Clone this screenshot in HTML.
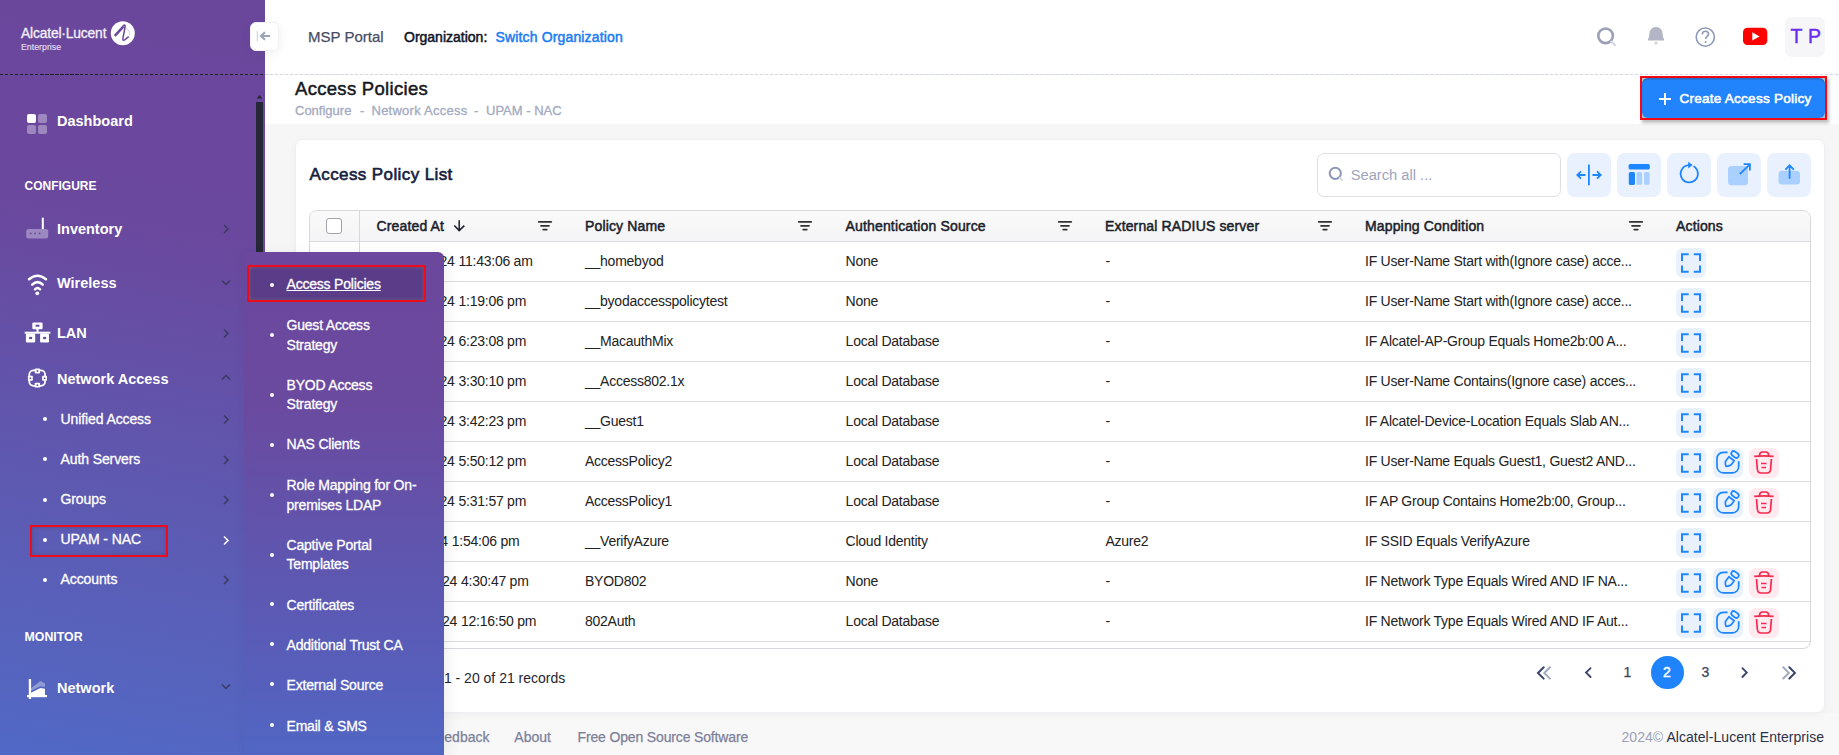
<!DOCTYPE html>
<html><head><meta charset="utf-8">
<style>
*{box-sizing:border-box;margin:0;padding:0}
html,body{width:1839px;height:755px;overflow:hidden;background:#f6f6f6;font-family:"Liberation Sans",sans-serif;color:#1f2430}
.t{position:absolute;white-space:nowrap;line-height:1}
.b{font-weight:bold}
svg{position:absolute;overflow:visible}
#side{position:absolute;left:0;top:0;width:265px;height:755px;background:linear-gradient(190deg,#6b479c 0%,#6a489d 30%,#5565bf 90%,#5068c6 100%)}
#topbar{position:absolute;left:265px;top:0;width:1574px;height:74px;background:#fff}
#dash1{position:absolute;left:0;top:74px;width:265px;height:1px;background:repeating-linear-gradient(90deg,#222 0 3.5px,transparent 3.5px 5px)}
#dash2{position:absolute;left:265px;top:74px;width:1574px;height:1px;background:repeating-linear-gradient(90deg,#d5d9e6 0 3.5px,transparent 3.5px 5px)}
#phead{position:absolute;left:265px;top:75px;width:1574px;height:49px;background:#fff}
#card{position:absolute;left:295px;top:139px;width:1530px;height:574px;background:#fff;border-radius:8px;border:1px solid #efeff3;box-shadow:0 3px 8px rgba(0,0,0,.035)}
#footer{position:absolute;left:265px;top:713px;width:1574px;height:42px;background:#f8f8f8}
.side .t{color:#fff}
.mi{font-size:14.5px;font-weight:bold}
.si{font-size:14px;-webkit-text-stroke:0.3px #fff;letter-spacing:-0.1px}
.chev{stroke:#3b3a60;stroke-width:1.5;fill:none}
.bul{position:absolute;width:4px;height:4px;border-radius:50%;background:#fff}
#fly{position:absolute;left:244px;top:252px;width:200px;height:503px;border-top-right-radius:6px;background:linear-gradient(180deg,#6b479d 0%,#6a4a9f 30%,#5a5bb6 75%,#5166c3 100%);box-shadow:4px 2px 14px rgba(40,40,60,.07)}
.fi{font-size:14px;color:#fff;line-height:19.5px;letter-spacing:-0.2px;-webkit-text-stroke:0.3px #fff}
.th{font-size:14px;font-weight:normal;color:#1b1e2b;letter-spacing:0.15px;-webkit-text-stroke:0.5px #1b1e2b}
.td{font-size:14px;color:#222;letter-spacing:-0.25px}
.hl{position:absolute;left:309px;width:1501px;height:1px;background:#dcdcdf}
.ab{position:absolute;width:30px;height:30px;border-radius:7px;background:#e8f1fd}
.ab.r{background:#ffeaef}
.ib{position:absolute;top:153px;width:44px;height:44px;border-radius:8px;background:#e8f1fd}
</style></head><body>
<div id="side" class="side">
  <!-- logo -->
  <div class="t" style="left:21px;top:27.1px;font-size:13.8px;color:#f4f0fa;letter-spacing:-0.15px;-webkit-text-stroke:0.3px #f4f0fa">Alcatel·Lucent</div>
  <div class="t" style="left:21px;top:42.6px;font-size:8.8px;color:#e6def2;-webkit-text-stroke:0.15px #e6def2">Enterprise</div>
  <svg style="left:0;top:0" width="1" height="1">
    <circle cx="122.8" cy="33.2" r="12" fill="#fff"/>
    <path d="M114.8 35.8 L123.5 26.3" stroke="#6b479c" stroke-width="2.5" fill="none"/><path d="M123 26 Q125.6 23.6 125 27.5 L122.9 38.3 Q122.4 41.3 125 39.6 L128.7 36.6" stroke="#6b479c" stroke-width="1.5" fill="none"/><path d="M126.6 28.6 Q129.8 29.6 129.5 35.3" stroke="#c9b9de" stroke-width="0.8" fill="none"/>
  </svg>
  <!-- scrollbar -->
  <div style="position:absolute;left:256px;top:102px;width:7px;height:153px;background:#252836"></div>
  <svg style="left:0;top:0" width="1" height="1"><path d="M256.5 98.5 L259.5 95 L262.5 98.5Z" fill="#252836"/></svg>

  <!-- Dashboard -->
  <svg style="left:0;top:0" width="1" height="1">
    <rect x="27" y="114" width="9" height="9" rx="2" fill="#fff"/>
    <rect x="38" y="114" width="9" height="9" rx="2" fill="#fff" fill-opacity=".35"/>
    <rect x="27" y="125" width="9" height="9" rx="2" fill="#fff" fill-opacity=".35"/>
    <rect x="38" y="125" width="9" height="9" rx="2" fill="#fff" fill-opacity=".35"/>
  </svg>
  <div class="t mi" style="left:57px;top:113.5px">Dashboard</div>
  <div class="t b" style="left:24.5px;top:179.7px;font-size:12px">CONFIGURE</div>
  <!-- Inventory -->
  <svg style="left:0;top:0" width="1" height="1">
    <rect x="41.8" y="217.7" width="2" height="11.3" fill="#fff"/>
    <rect x="26.2" y="229" width="22" height="9.6" rx="2.5" fill="#fff" fill-opacity=".35"/>
    <circle cx="30.6" cy="233.4" r=".9" fill="#6b479c"/><circle cx="35.1" cy="233.4" r=".9" fill="#6b479c"/><circle cx="39.6" cy="233.4" r=".9" fill="#6b479c"/>
  </svg>
  <div class="t mi" style="left:57px;top:221.9px">Inventory</div>
  <svg style="left:0;top:0" width="1" height="1"><path class="chev" d="M224 225 L228 229 L224 233"/></svg>
  <!-- Wireless -->
  <svg style="left:0;top:0" width="1" height="1" fill="none" stroke="#fff" stroke-width="2.5" stroke-linecap="round">
    <path d="M29 279.3 Q37.5 272.2 46 279.3"/>
    <path d="M32.2 284.6 Q37.5 279.6 42.8 284.6"/>
    <path d="M35 289.3 Q37.5 286.8 40 289.3"/>
    <circle cx="37.3" cy="293.3" r="1.9" fill="#fff" stroke="none"/>
  </svg>
  <div class="t mi" style="left:57px;top:275.8px">Wireless</div>
  <svg style="left:0;top:0" width="1" height="1"><path class="chev" d="M222 280.5 L226 284.5 L230 280.5"/></svg>
  <!-- LAN -->
  <svg style="left:0;top:0" width="1" height="1" fill="#fff">
    <rect x="32.3" y="322.4" width="10.3" height="6.9" rx="1.3"/><rect x="35.6" y="324.7" width="3.8" height="2" fill="#6b479d"/>
    <rect x="36.5" y="329" width="2" height="3"/>
    <rect x="24.7" y="331.7" width="25.7" height="2"/>
    <rect x="25.9" y="333.5" width="9.3" height="9" rx="1.3"/><rect x="29.1" y="336.9" width="3" height="2.2" fill="#6a4a9f"/>
    <rect x="40.1" y="333.5" width="8.9" height="9" rx="1.3"/><rect x="43.1" y="336.9" width="3" height="2.2" fill="#6a4a9f"/>
  </svg>
  <div class="t mi" style="left:57px;top:325.9px">LAN</div>
  <svg style="left:0;top:0" width="1" height="1"><path class="chev" d="M224 329.5 L228 333.5 L224 337.5"/></svg>
  <!-- Network Access -->
  <svg style="left:0;top:0" width="1" height="1" fill="none" stroke="#fff" stroke-width="1.8">
    <rect x="29.3" y="370.4" width="15.8" height="15.4" rx="4.2"/>
    <g fill="#fff" stroke="none">
      <rect x="34.7" y="368.5" width="5.4" height="4.9" rx=".8"/>
      <rect x="27.9" y="375.8" width="4.9" height="4.9" rx=".8"/>
      <rect x="42.1" y="375.8" width="4.9" height="4.9" rx=".8"/>
      <rect x="34.7" y="382.7" width="5.4" height="4.9" rx=".8"/>
    </g>
    <g fill="#6a4a9f" stroke="none">
      <rect x="36.6" y="370.2" width="1.6" height="1.6"/>
      <rect x="29.6" y="377.5" width="1.6" height="1.6"/>
      <rect x="43.8" y="377.5" width="1.6" height="1.6"/>
      <rect x="36.6" y="384.4" width="1.6" height="1.6"/>
    </g>
  </svg>
  <div class="t mi" style="left:57px;top:371.6px">Network Access</div>
  <svg style="left:0;top:0" width="1" height="1"><path class="chev" d="M222 379.5 L226 375.5 L230 379.5"/></svg>
  <!-- sub items -->
  <div class="bul" style="left:43px;top:417px"></div>
  <div class="t si" style="left:60.5px;top:411.5px">Unified Access</div>
  <svg style="left:0;top:0" width="1" height="1"><path class="chev" d="M224 415.5 L228 419.5 L224 423.5"/></svg>
  <div class="bul" style="left:43px;top:457px"></div>
  <div class="t si" style="left:60.5px;top:451.6px">Auth Servers</div>
  <svg style="left:0;top:0" width="1" height="1"><path class="chev" d="M224 456 L228 460 L224 464"/></svg>
  <div class="bul" style="left:43px;top:497.5px"></div>
  <div class="t si" style="left:60.5px;top:491.9px">Groups</div>
  <svg style="left:0;top:0" width="1" height="1"><path class="chev" d="M224 496 L228 500 L224 504"/></svg>
  <div class="bul" style="left:43px;top:537.5px"></div>
  <div class="t si" style="left:60.5px;top:532px">UPAM - NAC</div>
  <svg style="left:0;top:0" width="1" height="1"><path class="chev" style="stroke:#fff" d="M224 536.5 L228 540.5 L224 544.5"/></svg>
  <div style="position:absolute;left:30px;top:524.5px;width:138px;height:32px;border:2px solid #ee0b1a;box-shadow:inset 0 0 4px rgba(60,50,90,.35)"></div>
  <div class="bul" style="left:43px;top:577.5px"></div>
  <div class="t si" style="left:60.5px;top:572px">Accounts</div>
  <svg style="left:0;top:0" width="1" height="1"><path class="chev" d="M224 576 L228 580 L224 584"/></svg>
  <div class="t b" style="left:24.5px;top:631px;font-size:12.35px">MONITOR</div>
  <!-- Network -->
  <svg style="left:0;top:0" width="1" height="1">
    <path d="M31 688.3 L40.4 681.1 L45 683.4 L45 686.9 L40.4 686.2 L31 690.8Z" fill="#fff" fill-opacity=".35"/>
    <path d="M31 692.7 L40.4 688 L45 688.8 L45 696 L31 696Z" fill="#fff"/>
    <rect x="28.8" y="679" width="2.3" height="20" fill="#fff"/>
    <rect x="27" y="695" width="20" height="2.2" fill="#fff"/>
  </svg>
  <div class="t mi" style="left:57px;top:680.8px">Network</div>
  <svg style="left:0;top:0" width="1" height="1"><path class="chev" d="M222 684.5 L226 688.5 L230 684.5"/></svg>
</div>
<div id="dash1"></div>
<div id="topbar"></div>
<div id="dash2"></div>
<div id="phead"></div>
<div id="footer"></div>
<div id="card"></div>

<!-- collapse button -->
<div style="position:absolute;left:250px;top:22px;width:29px;height:29px;border-radius:6px;background:#fff;box-shadow:0 2px 10px rgba(60,60,90,.08);border:1px solid #f1f1f5"></div>
<svg style="left:0;top:0" width="1" height="1" fill="none" stroke="#9aa3b8" stroke-width="1.6">
  <path d="M257.3 31 V41.3" stroke="#ccd1dd" stroke-width="1.1"/><path d="M270 36 H261.5 M265 32.3 L261 36 L265 39.7" stroke-width="2"/>
</svg>

<!-- top bar -->
<div class="t" style="left:308px;top:29.1px;font-size:15px;color:#464d63;-webkit-text-stroke:0.25px #464d63">MSP Portal</div>
<div class="t" style="left:404px;top:30.1px;font-size:14px;color:#101426;-webkit-text-stroke:0.5px #101426">Organization:</div>
<div class="t" style="left:495.5px;top:30.1px;font-size:14px;color:#1b7cf3;letter-spacing:0.15px;-webkit-text-stroke:0.5px #1b7cf3">Switch Organization</div>

<!-- top right icons -->
<svg style="left:0;top:0" width="1" height="1" fill="none">
  <circle cx="1605.6" cy="35.8" r="7.3" stroke="#9ba0b6" stroke-width="2.6"/>
  <path d="M1611.5 41.8 L1615 45.2" stroke="#d7d9e2" stroke-width="2.4" stroke-linecap="round"/>
  <path d="M1648 39.5 H1664 M1649.5 39 C1650.5 37 1650.5 35.5 1650.5 33.5 C1650.5 30 1653 28 1656 28 C1659 28 1661.5 30 1661.5 33.5 C1661.5 35.5 1661.5 37 1662.5 39" stroke="#b4b5c6" stroke-width="2.2" fill="#b4b5c6" stroke-linejoin="round"/>
  <circle cx="1656" cy="43" r="1.6" fill="#d0d1dc"/>
  <circle cx="1705.3" cy="37.1" r="9.1" stroke="#8f9ab8" stroke-width="1.6"/>
  <path d="M1702.3 34.5 C1702.3 32.5 1703.8 31.3 1705.5 31.3 C1707.3 31.3 1708.5 32.6 1708.5 34.2 C1708.5 36.3 1705.6 36.6 1705.6 39" stroke="#8f9ab8" stroke-width="1.6"/>
  <circle cx="1705.6" cy="42" r="1" fill="#8f9ab8"/>
  <rect x="1743" y="27.8" width="24.3" height="17.2" rx="4.5" fill="#ff0000"/>
  <path d="M1752.3 32.3 L1759.5 36.4 L1752.3 40.5Z" fill="#fff"/>
</svg>
<div style="position:absolute;left:1785px;top:17px;width:40px;height:39.5px;border-radius:7px;background:#f6f6f8"></div>
<div class="t" style="left:1790.5px;top:26.8px;font-size:19.5px;color:#6c2cf0;letter-spacing:0.2px;-webkit-text-stroke:0.45px #6c2cf0">T P</div>

<!-- page header -->
<div class="t" style="left:295px;top:80.4px;font-size:18.5px;color:#161922;letter-spacing:0.3px;-webkit-text-stroke:0.5px #161922">Access Policies</div>
<div class="t" style="left:295px;top:104px;font-size:13px;color:#a3aac0;-webkit-text-stroke:0.3px #a3aac0">Configure</div>
<div class="t" style="left:360px;top:104px;font-size:13px;color:#a3aac0;-webkit-text-stroke:0.3px #a3aac0">-</div>
<div class="t" style="left:371.5px;top:104px;font-size:13px;letter-spacing:0.25px;color:#a3aac0;-webkit-text-stroke:0.3px #a3aac0">Network Access</div>
<div class="t" style="left:474px;top:104px;font-size:13px;color:#a3aac0;-webkit-text-stroke:0.3px #a3aac0">-</div>
<div class="t" style="left:486px;top:104px;font-size:13px;color:#a3aac0;-webkit-text-stroke:0.3px #a3aac0">UPAM - NAC</div>

<!-- create button -->
<div style="position:absolute;left:1642px;top:78px;width:183px;height:40px;background:#b4bac2"></div>
<div style="position:absolute;left:1642px;top:78px;width:183px;height:40px;border-radius:6px;background:#2284fd;box-shadow:inset 0 1.5px 1px rgba(40,60,90,.35)"></div>
<div style="position:absolute;left:1640px;top:76px;width:187px;height:44px;border:2px solid #f10a14;box-shadow:2px 3px 3px rgba(40,40,40,.3)"></div>
<svg style="left:0;top:0" width="1" height="1"><path d="M1665 93 V105 M1659 99 H1671" stroke="#fff" stroke-width="1.9"/></svg>
<div class="t" style="left:1679.6px;top:92px;font-size:13.5px;letter-spacing:0.25px;color:#fff;-webkit-text-stroke:0.55px #fff">Create Access Policy</div>

<!-- card header -->
<div class="t" style="left:309.5px;top:165.6px;font-size:17px;letter-spacing:0.4px;color:#15203d;-webkit-text-stroke:0.6px #15203d">Access Policy List</div>
<div style="position:absolute;left:1317px;top:153px;width:244px;height:44px;border:1px solid #dcdfe8;border-radius:7px;background:#fff"></div>
<svg style="left:0;top:0" width="1" height="1" fill="none">
  <circle cx="1335.3" cy="173.3" r="5.6" stroke="#8e98b6" stroke-width="2"/>
  <path d="M1339.8 177.8 L1342.2 180.2" stroke="#d5d8e2" stroke-width="1.9" stroke-linecap="round"/>
</svg>
<div class="t" style="left:1350.7px;top:167.9px;font-size:14.7px;color:#a0a5ba">Search all ...</div>
<div class="ib" style="left:1567px"></div>
<div class="ib" style="left:1617px"></div>
<div class="ib" style="left:1667px"></div>
<div class="ib" style="left:1717px"></div>
<div class="ib" style="left:1767px"></div>
<svg style="left:0;top:0" width="1" height="1" fill="none" stroke="#1e86ff" stroke-width="1.8">
  <path d="M1588.9 164.5 V185.2"/>
  <path d="M1577.5 175 H1585.5 M1581 171.3 L1577.3 175 L1581 178.7"/>
  <path d="M1592.5 175 H1600.5 M1597 171.3 L1600.7 175 L1597 178.7"/>
  <rect x="1628.6" y="164" width="21.2" height="5.6" rx="1.6" fill="#1e86ff" stroke="none"/>
  <rect x="1628.8" y="172" width="6.2" height="13" rx="1.6" fill="#1e86ff" stroke="none"/>
  <rect x="1636.5" y="172" width="5.6" height="12.8" rx="1.6" fill="#a9d0ff" stroke="none"/>
  <rect x="1644" y="172" width="5.6" height="12.8" rx="1.6" fill="#a9d0ff" stroke="none"/>
  <path d="M1693.5 166.3 A8.6 8.6 0 1 1 1688.8 165.2"/>
  <path d="M1688.2 161.7 L1692.6 165 L1688.2 168.5Z" fill="#1e86ff" stroke="none"/>
  <rect x="1728" y="166" width="20" height="19.2" rx="3.5" fill="#a9d0ff" stroke="none"/>
  <path d="M1739.8 174.2 L1749.8 164.3 M1743.6 164.2 H1749.9 V170.5"/>
  <rect x="1778.5" y="170.8" width="21.5" height="13.8" rx="3.5" fill="#a9d0ff" stroke="none"/>
  <path d="M1789.6 178.8 V165.5 M1785.4 169.6 L1789.6 165.3 L1793.8 169.6"/>
</svg>
<div style="position:absolute;left:309px;top:210px;width:1502px;height:439px;border:1px solid #d8d8dc;border-radius:8px;"></div>
<div style="position:absolute;left:310px;top:211px;width:1500px;height:30px;background:linear-gradient(180deg,#fafafa,#f4f4f6);border-radius:7px 7px 0 0"></div>
<div class="hl" style="top:241px"></div>
<div style="position:absolute;left:359px;top:211px;width:1px;height:70px;background:#d8d8dc"></div>
<div style="position:absolute;left:326px;top:218px;width:16px;height:16px;border:1px solid #a3a3aa;border-radius:3px;background:#fff"></div>
<div class="t th" style="left:376.5px;top:219.3px">Created At</div>
<div class="t th" style="left:585px;top:219.3px">Policy Name</div>
<div class="t th" style="left:845.6px;top:219.3px">Authentication Source</div>
<div class="t th" style="left:1105px;top:219.3px">External RADIUS server</div>
<div class="t th" style="left:1365px;top:219.3px">Mapping Condition</div>
<div class="t th" style="left:1676px;top:219.3px">Actions</div>
<svg style="left:0;top:0" width="1" height="1" fill="none" stroke="#1b1e2b" stroke-width="1.6"><path d="M459.2 220.3 V230.6 M454.3 225.6 L459.2 230.6 L464.3 225.6" stroke-width="1.5"/></svg>
<svg style="left:0;top:0" width="1" height="1" fill="none" stroke="#333" stroke-width="1.7" stroke-linecap="round"><path d="M538.7 221.8 H551.3 M541 225.8 H549 M543.2 229.6 H546.8"/><path d="M798.7 221.8 H811.3 M801 225.8 H809 M803.2 229.6 H806.8"/><path d="M1058.7 221.8 H1071.3 M1061 225.8 H1069 M1063.2 229.6 H1066.8"/><path d="M1318.7 221.8 H1331.3 M1321 225.8 H1329 M1323.2 229.6 H1326.8"/><path d="M1629.7 221.8 H1642.3 M1632 225.8 H1640 M1634.2 229.6 H1637.8"/></svg>
<div class="t td" style="left:368.5px;width:86px;text-align:right;top:254.1px">02/15/2024</div>
<div class="t td" style="left:458.5px;top:254.1px">11:43:06 am</div>
<div class="t td" style="left:585px;top:254.1px">__homebyod</div>
<div class="t td" style="left:845.6px;top:254.1px">None</div>
<div class="t td" style="left:1105.5px;top:254.1px">-</div>
<div class="t td" style="left:1365px;top:254.1px">IF User-Name Start with(Ignore case) acce...</div>
<div class="hl" style="top:281px"></div>
<div class="ab" style="left:1676px;top:248px"></div>
<svg style="left:0;top:0" width="1" height="1" fill="none" stroke="#1e86ff" stroke-width="1.7"><path d="M1682 261 V254.3 H1688.7 M1693.8 254.3 H1700 V261 M1700 265.6 V271.8 H1693.8 M1688.7 271.8 H1682 V265.6" stroke-width="2"/></svg>
<div class="t td" style="left:368.5px;width:86px;text-align:right;top:294.1px">02/15/2024</div>
<div class="t td" style="left:458.5px;top:294.1px">1:19:06 pm</div>
<div class="t td" style="left:585px;top:294.1px">__byodaccesspolicytest</div>
<div class="t td" style="left:845.6px;top:294.1px">None</div>
<div class="t td" style="left:1105.5px;top:294.1px">-</div>
<div class="t td" style="left:1365px;top:294.1px">IF User-Name Start with(Ignore case) acce...</div>
<div class="hl" style="top:321px"></div>
<div class="ab" style="left:1676px;top:288px"></div>
<svg style="left:0;top:0" width="1" height="1" fill="none" stroke="#1e86ff" stroke-width="1.7"><path d="M1682 301 V294.3 H1688.7 M1693.8 294.3 H1700 V301 M1700 305.6 V311.8 H1693.8 M1688.7 311.8 H1682 V305.6" stroke-width="2"/></svg>
<div class="t td" style="left:368.5px;width:86px;text-align:right;top:334.1px">02/15/2024</div>
<div class="t td" style="left:458.5px;top:334.1px">6:23:08 pm</div>
<div class="t td" style="left:585px;top:334.1px">__MacauthMix</div>
<div class="t td" style="left:845.6px;top:334.1px">Local Database</div>
<div class="t td" style="left:1105.5px;top:334.1px">-</div>
<div class="t td" style="left:1365px;top:334.1px">IF Alcatel-AP-Group Equals Home2b:00 A...</div>
<div class="hl" style="top:361px"></div>
<div class="ab" style="left:1676px;top:328px"></div>
<svg style="left:0;top:0" width="1" height="1" fill="none" stroke="#1e86ff" stroke-width="1.7"><path d="M1682 341 V334.3 H1688.7 M1693.8 334.3 H1700 V341 M1700 345.6 V351.8 H1693.8 M1688.7 351.8 H1682 V345.6" stroke-width="2"/></svg>
<div class="t td" style="left:368.5px;width:86px;text-align:right;top:374.1px">02/15/2024</div>
<div class="t td" style="left:458.5px;top:374.1px">3:30:10 pm</div>
<div class="t td" style="left:585px;top:374.1px">__Access802.1x</div>
<div class="t td" style="left:845.6px;top:374.1px">Local Database</div>
<div class="t td" style="left:1105.5px;top:374.1px">-</div>
<div class="t td" style="left:1365px;top:374.1px">IF User-Name Contains(Ignore case) acces...</div>
<div class="hl" style="top:401px"></div>
<div class="ab" style="left:1676px;top:368px"></div>
<svg style="left:0;top:0" width="1" height="1" fill="none" stroke="#1e86ff" stroke-width="1.7"><path d="M1682 381 V374.3 H1688.7 M1693.8 374.3 H1700 V381 M1700 385.6 V391.8 H1693.8 M1688.7 391.8 H1682 V385.6" stroke-width="2"/></svg>
<div class="t td" style="left:368.5px;width:86px;text-align:right;top:414.1px">02/15/2024</div>
<div class="t td" style="left:458.5px;top:414.1px">3:42:23 pm</div>
<div class="t td" style="left:585px;top:414.1px">__Guest1</div>
<div class="t td" style="left:845.6px;top:414.1px">Local Database</div>
<div class="t td" style="left:1105.5px;top:414.1px">-</div>
<div class="t td" style="left:1365px;top:414.1px">IF Alcatel-Device-Location Equals Slab AN...</div>
<div class="hl" style="top:441px"></div>
<div class="ab" style="left:1676px;top:408px"></div>
<svg style="left:0;top:0" width="1" height="1" fill="none" stroke="#1e86ff" stroke-width="1.7"><path d="M1682 421 V414.3 H1688.7 M1693.8 414.3 H1700 V421 M1700 425.6 V431.8 H1693.8 M1688.7 431.8 H1682 V425.6" stroke-width="2"/></svg>
<div class="t td" style="left:368.5px;width:86px;text-align:right;top:454.1px">02/15/2024</div>
<div class="t td" style="left:458.5px;top:454.1px">5:50:12 pm</div>
<div class="t td" style="left:585px;top:454.1px">AccessPolicy2</div>
<div class="t td" style="left:845.6px;top:454.1px">Local Database</div>
<div class="t td" style="left:1105.5px;top:454.1px">-</div>
<div class="t td" style="left:1365px;top:454.1px">IF User-Name Equals Guest1, Guest2 AND...</div>
<div class="hl" style="top:481px"></div>
<div class="ab" style="left:1676px;top:448px"></div>
<div class="ab" style="left:1713px;top:448px"></div>
<div class="ab r" style="left:1749px;top:448px"></div>
<svg style="left:0;top:0" width="1" height="1" fill="none" stroke="#1e86ff" stroke-width="1.7"><path d="M1682 461 V454.3 H1688.7 M1693.8 454.3 H1700 V461 M1700 465.6 V471.8 H1693.8 M1688.7 471.8 H1682 V465.6" stroke-width="2"/><path d="M1727.6 452.4 H1723.2 A6.2 6.2 0 0 0 1717 458.6 V466.6 A6.2 6.2 0 0 0 1723.2 472.8 H1732.5 A6.2 6.2 0 0 0 1738.7 466.6 V461.2"/><path d="M1728.9 456.7 L1734.2 460.7 L1731.2 464.8 Q1729.3 466.2 1726 466.5 Q1725.1 464 1725.4 461.6 Z" stroke-linejoin="round"/><rect x="1731" y="452.1" width="8" height="4.8" rx="2.4" transform="rotate(37 1735 454.5)"/><g stroke="#f5284f"><path d="M1754.2 456.4 Q1763.8 455.4 1773.5 456.4"/><path d="M1759.6 456 V455 Q1759.6 452 1762.6 452 H1765.6 Q1768.6 452 1768.6 455 V456"/><path d="M1756.5 459 L1757.4 469.5 Q1757.8 473 1761 473 H1767 Q1770.2 473 1770.6 469.5 L1771.4 459"/><path d="M1761 463.5 H1766.5 M1761.5 467.5 H1766"/></g></svg>
<div class="t td" style="left:368.5px;width:86px;text-align:right;top:494.1px">02/15/2024</div>
<div class="t td" style="left:458.5px;top:494.1px">5:31:57 pm</div>
<div class="t td" style="left:585px;top:494.1px">AccessPolicy1</div>
<div class="t td" style="left:845.6px;top:494.1px">Local Database</div>
<div class="t td" style="left:1105.5px;top:494.1px">-</div>
<div class="t td" style="left:1365px;top:494.1px">IF AP Group Contains Home2b:00, Group...</div>
<div class="hl" style="top:521px"></div>
<div class="ab" style="left:1676px;top:488px"></div>
<div class="ab" style="left:1713px;top:488px"></div>
<div class="ab r" style="left:1749px;top:488px"></div>
<svg style="left:0;top:0" width="1" height="1" fill="none" stroke="#1e86ff" stroke-width="1.7"><path d="M1682 501 V494.3 H1688.7 M1693.8 494.3 H1700 V501 M1700 505.6 V511.8 H1693.8 M1688.7 511.8 H1682 V505.6" stroke-width="2"/><path d="M1727.6 492.4 H1723.2 A6.2 6.2 0 0 0 1717 498.6 V506.6 A6.2 6.2 0 0 0 1723.2 512.8 H1732.5 A6.2 6.2 0 0 0 1738.7 506.6 V501.2"/><path d="M1728.9 496.7 L1734.2 500.7 L1731.2 504.8 Q1729.3 506.2 1726 506.5 Q1725.1 504 1725.4 501.6 Z" stroke-linejoin="round"/><rect x="1731" y="492.1" width="8" height="4.8" rx="2.4" transform="rotate(37 1735 494.5)"/><g stroke="#f5284f"><path d="M1754.2 496.4 Q1763.8 495.4 1773.5 496.4"/><path d="M1759.6 496 V495 Q1759.6 492 1762.6 492 H1765.6 Q1768.6 492 1768.6 495 V496"/><path d="M1756.5 499 L1757.4 509.5 Q1757.8 513 1761 513 H1767 Q1770.2 513 1770.6 509.5 L1771.4 499"/><path d="M1761 503.5 H1766.5 M1761.5 507.5 H1766"/></g></svg>
<div class="t td" style="left:361.8px;width:86px;text-align:right;top:534.1px">2/15/2024</div>
<div class="t td" style="left:451.8px;top:534.1px">1:54:06 pm</div>
<div class="t td" style="left:585px;top:534.1px">__VerifyAzure</div>
<div class="t td" style="left:845.6px;top:534.1px">Cloud Identity</div>
<div class="t td" style="left:1105.5px;top:534.1px">Azure2</div>
<div class="t td" style="left:1365px;top:534.1px">IF SSID Equals VerifyAzure</div>
<div class="hl" style="top:561px"></div>
<div class="ab" style="left:1676px;top:528px"></div>
<svg style="left:0;top:0" width="1" height="1" fill="none" stroke="#1e86ff" stroke-width="1.7"><path d="M1682 541 V534.3 H1688.7 M1693.8 534.3 H1700 V541 M1700 545.6 V551.8 H1693.8 M1688.7 551.8 H1682 V545.6" stroke-width="2"/></svg>
<div class="t td" style="left:371.0px;width:86px;text-align:right;top:574.1px">02/15/2024</div>
<div class="t td" style="left:461.0px;top:574.1px">4:30:47 pm</div>
<div class="t td" style="left:585px;top:574.1px">BYOD802</div>
<div class="t td" style="left:845.6px;top:574.1px">None</div>
<div class="t td" style="left:1105.5px;top:574.1px">-</div>
<div class="t td" style="left:1365px;top:574.1px">IF Network Type Equals Wired AND IF NA...</div>
<div class="hl" style="top:601px"></div>
<div class="ab" style="left:1676px;top:568px"></div>
<div class="ab" style="left:1713px;top:568px"></div>
<div class="ab r" style="left:1749px;top:568px"></div>
<svg style="left:0;top:0" width="1" height="1" fill="none" stroke="#1e86ff" stroke-width="1.7"><path d="M1682 581 V574.3 H1688.7 M1693.8 574.3 H1700 V581 M1700 585.6 V591.8 H1693.8 M1688.7 591.8 H1682 V585.6" stroke-width="2"/><path d="M1727.6 572.4 H1723.2 A6.2 6.2 0 0 0 1717 578.6 V586.6 A6.2 6.2 0 0 0 1723.2 592.8 H1732.5 A6.2 6.2 0 0 0 1738.7 586.6 V581.2"/><path d="M1728.9 576.7 L1734.2 580.7 L1731.2 584.8 Q1729.3 586.2 1726 586.5 Q1725.1 584 1725.4 581.6 Z" stroke-linejoin="round"/><rect x="1731" y="572.1" width="8" height="4.8" rx="2.4" transform="rotate(37 1735 574.5)"/><g stroke="#f5284f"><path d="M1754.2 576.4 Q1763.8 575.4 1773.5 576.4"/><path d="M1759.6 576 V575 Q1759.6 572 1762.6 572 H1765.6 Q1768.6 572 1768.6 575 V576"/><path d="M1756.5 579 L1757.4 589.5 Q1757.8 593 1761 593 H1767 Q1770.2 593 1770.6 589.5 L1771.4 579"/><path d="M1761 583.5 H1766.5 M1761.5 587.5 H1766"/></g></svg>
<div class="t td" style="left:371.0px;width:86px;text-align:right;top:614.1px">02/15/2024</div>
<div class="t td" style="left:461.0px;top:614.1px">12:16:50 pm</div>
<div class="t td" style="left:585px;top:614.1px">802Auth</div>
<div class="t td" style="left:845.6px;top:614.1px">Local Database</div>
<div class="t td" style="left:1105.5px;top:614.1px">-</div>
<div class="t td" style="left:1365px;top:614.1px">IF Network Type Equals Wired AND IF Aut...</div>
<div class="hl" style="top:641px"></div>
<div class="ab" style="left:1676px;top:608px"></div>
<div class="ab" style="left:1713px;top:608px"></div>
<div class="ab r" style="left:1749px;top:608px"></div>
<svg style="left:0;top:0" width="1" height="1" fill="none" stroke="#1e86ff" stroke-width="1.7"><path d="M1682 621 V614.3 H1688.7 M1693.8 614.3 H1700 V621 M1700 625.6 V631.8 H1693.8 M1688.7 631.8 H1682 V625.6" stroke-width="2"/><path d="M1727.6 612.4 H1723.2 A6.2 6.2 0 0 0 1717 618.6 V626.6 A6.2 6.2 0 0 0 1723.2 632.8 H1732.5 A6.2 6.2 0 0 0 1738.7 626.6 V621.2"/><path d="M1728.9 616.7 L1734.2 620.7 L1731.2 624.8 Q1729.3 626.2 1726 626.5 Q1725.1 624 1725.4 621.6 Z" stroke-linejoin="round"/><rect x="1731" y="612.1" width="8" height="4.8" rx="2.4" transform="rotate(37 1735 614.5)"/><g stroke="#f5284f"><path d="M1754.2 616.4 Q1763.8 615.4 1773.5 616.4"/><path d="M1759.6 616 V615 Q1759.6 612 1762.6 612 H1765.6 Q1768.6 612 1768.6 615 V616"/><path d="M1756.5 619 L1757.4 629.5 Q1757.8 633 1761 633 H1767 Q1770.2 633 1770.6 629.5 L1771.4 619"/><path d="M1761 623.5 H1766.5 M1761.5 627.5 H1766"/></g></svg>
<!-- records -->
<div class="t" style="left:378.5px;top:671.1px;font-size:14px;color:#1f2430;letter-spacing:0px">Showing 21 - 20 of 21 records</div>
<!-- pagination -->
<div style="position:absolute;left:1651px;top:656px;width:32.5px;height:33px;border-radius:50%;background:#1f84fb"></div>
<div class="t" style="left:1623.5px;top:665.2px;font-size:14px;color:#3c4460;-webkit-text-stroke:0.25px #3c4460">1</div>
<div class="t" style="left:1663px;top:665.2px;font-size:14px;color:#fff;-webkit-text-stroke:0.45px #fff">2</div>
<div class="t" style="left:1701.5px;top:665.2px;font-size:14px;color:#3c4460;-webkit-text-stroke:0.25px #3c4460">3</div>
<svg style="left:0;top:0" width="1" height="1" fill="none" stroke-width="1.8" stroke-linecap="round">
  <path d="M1590.6 668.1 L1586 672.5 L1590.6 677" stroke="#3a4468"/>
  <path d="M1742.4 668.1 L1746.8 672.5 L1742.4 677" stroke="#3a4468"/>
  <path d="M1543.7 667.3 L1538 673 L1543.7 678.6" stroke="#3a4468" stroke-width="2"/>
  <path d="M1550 667.3 L1544.3 673 L1550 678.6" stroke="#a4aac0" stroke-width="2"/>
  <path d="M1783.2 667.3 L1788.8 672.9 L1783.2 678.5" stroke="#a4aac0" stroke-width="2"/>
  <path d="M1789.3 667.3 L1794.9 672.9 L1789.3 678.5" stroke="#3a4468" stroke-width="2"/>
</svg>
<!-- footer -->
<div class="t" style="left:428px;top:730.1px;font-size:14px;color:#7c8099;-webkit-text-stroke:0.25px #7c8099">Feedback</div>
<div class="t" style="left:514.3px;top:730.1px;font-size:14px;color:#7c8099;-webkit-text-stroke:0.25px #7c8099">About</div>
<div class="t" style="left:577.5px;top:730.1px;font-size:14px;color:#7c8099;-webkit-text-stroke:0.25px #7c8099;letter-spacing:-0.15px">Free Open Source Software</div>
<div class="t" style="left:1621.5px;top:730.1px;font-size:14px;color:#2d3048;letter-spacing:0.05px"><span style="color:#9ca0b4">2024©</span> Alcatel-Lucent Enterprise</div>

<!-- flyout -->
<div id="fly">
</div>
<div style="position:absolute;left:249px;top:267px;width:175px;height:33px;background:#5a3c88;box-shadow:inset 0 0 4px rgba(110,100,130,.9)"></div>
<div style="position:absolute;left:247px;top:265px;width:179px;height:37px;border:2px solid #ee0b1a"></div>
<div class="bul" style="left:270px;top:283px"></div>
<div class="t fi" style="left:286.5px;top:274.8px;text-decoration:underline">Access Policies</div>
<div class="bul" style="left:270px;top:333px"></div>
<div class="t fi" style="left:286.5px;top:316.1px">Guest Access<br>Strategy</div>
<div class="bul" style="left:270px;top:393px"></div>
<div class="t fi" style="left:286.5px;top:375.5px">BYOD Access<br>Strategy</div>
<div class="bul" style="left:270px;top:443px"></div>
<div class="t fi" style="left:286.5px;top:435.4px">NAS Clients</div>
<div class="bul" style="left:270px;top:493px"></div>
<div class="t fi" style="left:286.5px;top:476.0px">Role Mapping for On-<br>premises LDAP</div>
<div class="bul" style="left:270px;top:553px"></div>
<div class="t fi" style="left:286.5px;top:535.5px">Captive Portal<br>Templates</div>
<div class="bul" style="left:270px;top:602px"></div>
<div class="t fi" style="left:286.5px;top:595.8px">Certificates</div>
<div class="bul" style="left:270px;top:642px"></div>
<div class="t fi" style="left:286.5px;top:636.3px">Additional Trust CA</div>
<div class="bul" style="left:270px;top:682px"></div>
<div class="t fi" style="left:286.5px;top:676.0px">External Source</div>
<div class="bul" style="left:270px;top:723px"></div>
<div class="t fi" style="left:286.5px;top:717.0px">Email &amp; SMS</div>

</body></html>
